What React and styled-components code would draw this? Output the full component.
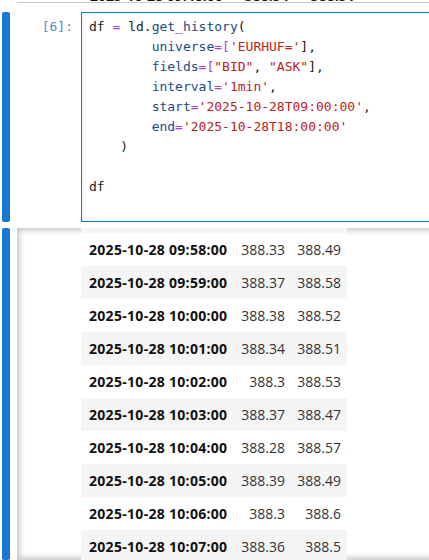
import React from "react";
import styled, { createGlobalStyle } from "styled-components";

// rows of the scrolled dataframe output (first one is mostly hidden above)
const rows = [
  ["2025-10-28 09:57:00", "388.35", "388.52"],
  ["2025-10-28 09:58:00", "388.33", "388.49"],
  ["2025-10-28 09:59:00", "388.37", "388.58"],
  ["2025-10-28 10:00:00", "388.38", "388.52"],
  ["2025-10-28 10:01:00", "388.34", "388.51"],
  ["2025-10-28 10:02:00", "388.3", "388.53"],
  ["2025-10-28 10:03:00", "388.37", "388.47"],
  ["2025-10-28 10:04:00", "388.28", "388.57"],
  ["2025-10-28 10:05:00", "388.39", "388.49"],
  ["2025-10-28 10:06:00", "388.3", "388.6"],
  ["2025-10-28 10:07:00", "388.36", "388.5"],
];

const GlobalStyle = createGlobalStyle`
  html, body {
    margin: 0;
    padding: 0;
    background: #fff;
    overflow: hidden;
  }
  #root {
    width: 640px;
    height: 560px;
  }
`;

const App = () => {
  return (
    <Notebook>
      <GlobalStyle />
      <PrevOutput>
        <PrevRow>
          <span>2025-10-28 09:48:00</span>
          <span>388.34</span>
          <span>388.51</span>
        </PrevRow>
      </PrevOutput>

      <Cell>
        <Collapser />
        <Prompt>[6]:</Prompt>
        <Editor>
          <Line>
            df <Op>=</Op> ld.<Prop>get_history</Prop>(
          </Line>
          <Line>
            {"        "}
            <Prop>universe</Prop>
            <Op>=[</Op>
            <Str>'EURHUF='</Str>],
          </Line>
          <Line>
            {"        "}
            <Prop>fields</Prop>
            <Op>=[</Op>
            <Str>"BID"</Str>, <Str>"ASK"</Str>],
          </Line>
          <Line>
            {"        "}
            <Prop>interval</Prop>
            <Op>=</Op>
            <Str>'1min'</Str>,
          </Line>
          <Line>
            {"        "}
            <Prop>start</Prop>
            <Op>=</Op>
            <Str>'2025-10-28T09:00:00'</Str>,
          </Line>
          <Line>
            {"        "}
            <Prop>end</Prop>
            <Op>=</Op>
            <Str>'2025-10-28T18:00:00'</Str>
          </Line>
          <Line>{"    )"}</Line>
          <Line>{" "}</Line>
          <Line>df</Line>
          <Line>{" "}</Line>
        </Editor>
      </Cell>

      <OutputCell>
        <Collapser />
        <OutputScroll>
          <Table>
            <colgroup>
              <col style={{ width: 154 }} />
              <col style={{ width: 56 }} />
              <col style={{ width: 56 }} />
            </colgroup>
            <tbody>
              {rows.map((r, i) => (
                <Row key={r[0]} shaded={i % 2 === 0}>
                  <DateCell>{r[0]}</DateCell>
                  <NumCell>{r[1]}</NumCell>
                  <NumCell>{r[2]}</NumCell>
                </Row>
              ))}
            </tbody>
          </Table>
        </OutputScroll>
      </OutputCell>
    </Notebook>
  );
};

const Notebook = styled.div`
  display: flex;
  flex-direction: column;
  height: 560px;
`;

const PrevOutput = styled.div`
  margin-left: 17px;
  height: 2px;
  overflow: hidden;
  border-bottom: 1px solid #c9c9c9;
`;

const PrevRow = styled.div`
  display: flex;
  gap: 22px;
  margin-top: -11px;
  padding-left: 73px;
  font-family: "Open Sans", sans-serif;
  font-size: 14px;
  font-weight: 700;
  line-height: 14px;
  color: #111;
`;

const Cell = styled.div`
  display: flex;
  margin-top: 9px;
  height: 210px;
  padding-left: 2px;
`;

const Collapser = styled.div`
  width: 8px;
  flex-shrink: 0;
  background: #1976d2;
  border-radius: 2px;
`;

const Prompt = styled.div`
  width: 71px;
  flex-shrink: 0;
  box-sizing: border-box;
  padding: 5px 8px 0 0;
  text-align: right;
  font-family: "DejaVu Sans Mono", monospace;
  font-size: 13px;
  line-height: 20px;
  color: #5289c4;
`;

const Editor = styled.div`
  flex: 1;
  box-sizing: border-box;
  border: 1px solid #1976d2;
  box-shadow: inset 0 0 2px rgba(25, 118, 210, 0.25);
  padding: 4px 7px;
  background: #fff;
  font-family: "DejaVu Sans Mono", monospace;
  font-size: 13px;
  line-height: 20px;
  color: #1a1a1a;
  white-space: pre;
`;

const Line = styled.div`
  height: 20px;
`;

const Op = styled.span`
  color: #a742d4;
`;

const Prop = styled.span`
  color: #1b4a82;
`;

const Str = styled.span`
  color: #ba2121;
`;

const OutputCell = styled.div`
  display: flex;
  flex: 1;
  margin-top: 6px;
  padding-left: 2px;
  min-height: 0;
`;

const OutputScroll = styled.div`
  flex: 1;
  margin-left: 7px;
  overflow: hidden;
  box-shadow: inset 0 0 6px 2px rgba(0, 0, 0, 0.25);
`;

const Table = styled.table`
  border-collapse: collapse;
  table-layout: fixed;
  width: 266px;
  margin-left: 64px;
  margin-top: -28px;
  font-family: "Open Sans", sans-serif;
  font-size: 14px;
`;

const Row = styled.tr`
  height: 33px;
  background: ${(props) => (props.shaded ? "#f5f5f5" : "#fff")};
`;

const DateCell = styled.th`
  padding: 0 0 0 8px;
  text-align: left;
  font-weight: 700;
  letter-spacing: 0.3px;
  color: #111;
  white-space: nowrap;
`;

const NumCell = styled.td`
  padding: 0 6px 0 0;
  text-align: right;
  color: #333;
  white-space: nowrap;
`;

export default App;
